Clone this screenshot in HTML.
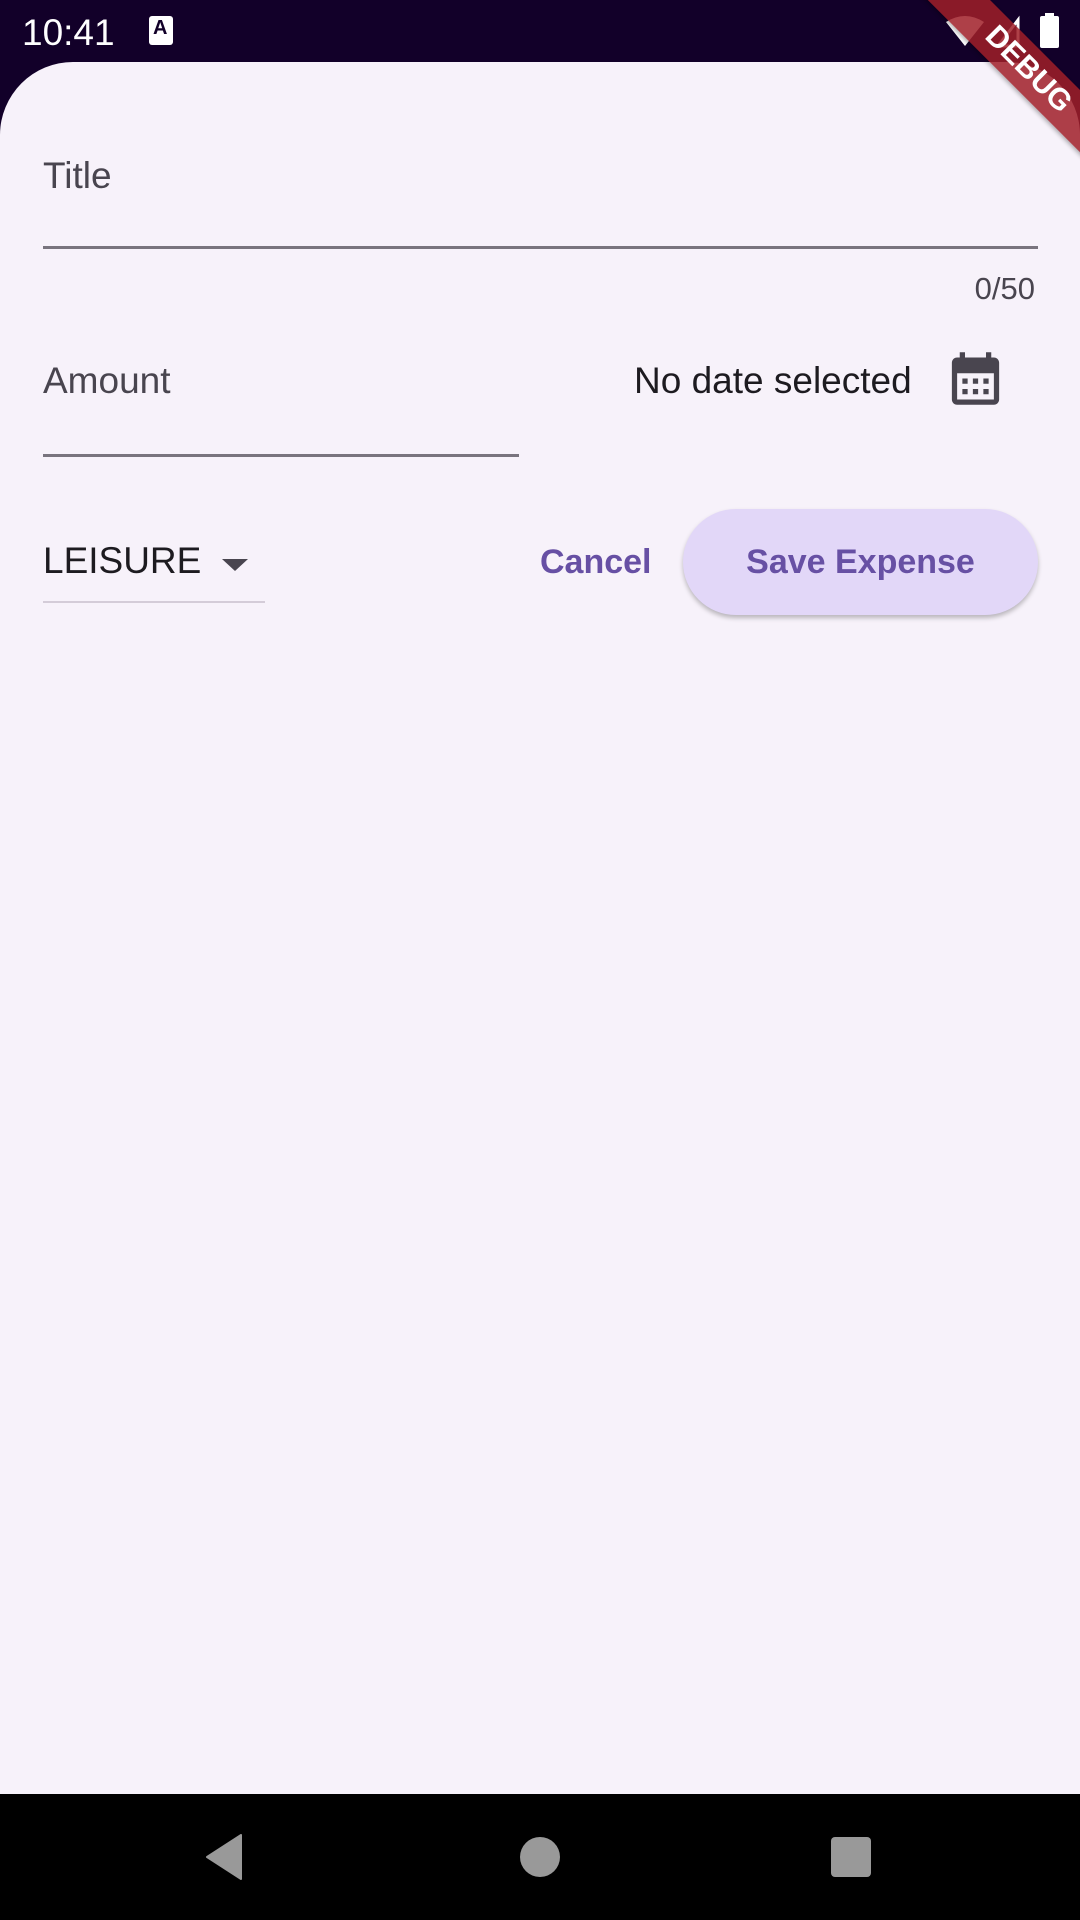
<!DOCTYPE html>
<html><head><meta charset="utf-8"><style>
html,body{margin:0;padding:0;width:1080px;height:1920px;overflow:hidden;background:#120029;font-family:"Liberation Sans",Roboto,sans-serif;}
.abs{position:absolute;}
#sheet{position:absolute;left:0;top:62px;width:1080px;height:1732px;background:#f7f2fa;border-top-left-radius:73px 73px;border-top-right-radius:73px;}
.lbl{color:#49454f;font-size:37px;}
.line{position:absolute;height:3px;background:#79747e;}
#nav{position:absolute;left:0;top:1794px;width:1080px;height:126px;background:#000;}
</style></head><body>
<div class="abs" style="left:22px;top:12px;color:#fff;font-size:37px;">10:41</div>
<div class="abs" style="left:149px;top:16px;width:24px;height:29px;background:#fff;border-radius:3px;"></div>
<div class="abs" style="left:153px;top:17px;font-size:20px;font-weight:bold;color:#120029;">A</div>
<svg class="abs" style="left:940px;top:12px" width="130" height="40" viewBox="0 0 130 40">
<path d="M6 10 Q25 -2 44 10 L25 34 Z" fill="#fff"/>
<path d="M58 34 L78 8 L78 34 Z" fill="none" stroke="#fff" stroke-width="3"/>
<rect x="100" y="4" width="19" height="32" rx="2" fill="#fff"/><rect x="105" y="1" width="9" height="4" fill="#fff"/>
</svg>
<div id="sheet">
<div class="abs lbl" style="left:43px;top:93px;">Title</div>
<div class="line" style="left:43px;top:184px;width:995px;"></div>
<div class="abs" style="right:45px;top:209px;color:#49454f;font-size:31px;">0/50</div>
<div class="abs lbl" style="left:43px;top:298px;">Amount</div>
<div class="line" style="left:43px;top:392px;width:476px;"></div>
<div class="abs" style="left:634px;top:298px;color:#1d1b20;font-size:37px;">No date selected</div>
<svg class="abs" style="left:944px;top:285px" width="63" height="63" viewBox="0 0 24 24"><path fill="#49454f" d="M19 4h-1V2h-2v2H8V2H6v2H5c-1.11 0-2 .9-2 2v14c0 1.1.89 2 2 2h14c1.1 0 2-.9 2-2V6c0-1.1-.9-2-2-2zm0 16H5V10h14v10zM7 12h2v2H7zm4 0h2v2h-2zm4 0h2v2h-2zm-8 4h2v2H7zm4 0h2v2h-2zm4 0h2v2h-2z"/></svg>
<div class="abs" style="left:43px;top:478px;color:#1d1b20;font-size:37px;">LEISURE</div>
<svg class="abs" style="left:222px;top:497px" width="26" height="12" viewBox="0 0 26 12"><path d="M0 0H26L13 12Z" fill="#49454f"/></svg>
<div class="abs" style="left:43px;top:539px;width:222px;height:2px;background:#d4ccd8;"></div>
<div class="abs" style="left:540px;top:481px;color:#6750a4;font-size:34px;font-weight:bold;">Cancel</div>
<div class="abs" style="left:683px;top:447px;width:355px;height:106px;border-radius:53px;background:#e2d7f8;box-shadow:0 3px 5px rgba(0,0,0,0.25);"></div>
<div class="abs" style="left:683px;top:481px;width:355px;text-align:center;color:#6750a4;font-size:34px;font-weight:bold;">Save Expense</div>
</div>
<div class="abs" style="left:900px;top:0;width:180px;height:180px;overflow:hidden;">
<div style="position:absolute;width:260px;height:44px;background:rgba(160,30,40,0.85);transform:rotate(45deg);transform-origin:0 0;left:52px;top:-38px;color:#fff;font-weight:bold;font-size:30px;text-align:center;line-height:44px;box-shadow:0 2px 4px rgba(0,0,0,0.3);">DEBUG</div>
</div>
<div id="nav">
<svg class="abs" style="left:205px;top:40px" width="40" height="46" viewBox="0 0 40 46"><path d="M36 1 L36 45 L2 23 Z" fill="#999" stroke="#999" stroke-width="2" stroke-linejoin="round"/></svg>
<div class="abs" style="left:520px;top:43px;width:40px;height:40px;border-radius:50%;background:#999;"></div>
<div class="abs" style="left:831px;top:43px;width:40px;height:40px;border-radius:4px;background:#999;"></div>
</div>
</body></html>
